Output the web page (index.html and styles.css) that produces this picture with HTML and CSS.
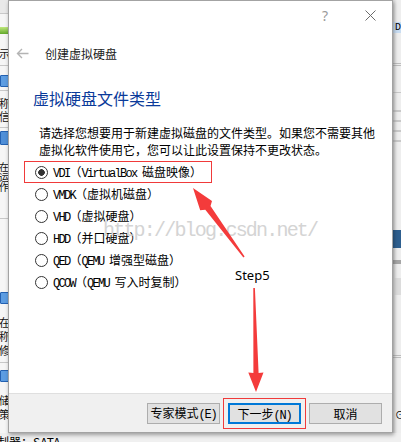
FILE: index.html
```html
<!DOCTYPE html>
<html lang="zh-CN">
<head>
  <meta charset="UTF-8" />
  <meta name="viewport" content="width=device-width, initial-scale=1.0"/>
  <title>创建虚拟硬盘</title>
  <link rel="stylesheet" href="styles.css">
</head>
<body>

  <!-- VirtualBox main window behind the dialog -->
  <div class="desk">
    <div class="desk-main">
      <div class="side side-left">
        <div class="tool"></div>
        <div class="green"></div>
        <p class="frag f1">示</p>
        <div class="rule r1"></div>
        <div class="icon i1"></div>
        <div class="rule r2"></div>
        <p class="frag f2">称<br>信</p>
        <div class="rule r3"></div>
        <div class="icon i2"></div>
        <p class="frag f3">在<br>运<br>作</p>
        <div class="rule r4"></div>
        <div class="icon i3"></div>
        <p class="frag f4">在<br>称<br>修</p>
        <div class="rule r5"></div>
        <div class="icon i4"></div>
        <p class="frag f5">储<br>策</p>
      </div>

      <div class="side side-right">
        <div class="sel">D</div>
        <div class="rule2 q1"></div>
        <div class="rule q2"></div>
        <div class="lines"><span></span><span></span><span></span><span></span></div>
        <div class="blue-row"></div>
        <div class="dark-line"></div>
        <div class="gray-row"></div>
        <div class="rule2 q3"></div>
        <div class="dot">⊙</div>
      </div>
    </div>
    <div class="desk-foot"><span class="sata">制器：SATA</span></div>
  </div>

  <!-- the wizard dialog -->
  <div class="dialog">
    <div class="titlebar">
      <span class="help">?</span>
      <span class="close">
        <svg width="11" height="11" viewBox="0 0 11 11"><path d="M0.5 0.5 L10.5 10.5 M10.5 0.5 L0.5 10.5" stroke="#6b6b6b" stroke-width="1" fill="none"/></svg>
      </span>
    </div>

    <div class="nav">
      <svg class="back" width="13" height="11" viewBox="0 0 13 11"><path d="M12.5 5.5 H1.5 M6 1 L1.5 5.5 L6 10" stroke="#b4b4b4" stroke-width="1.4" fill="none"/></svg>
      <span class="nav-title">创建虚拟硬盘</span>
    </div>

    <div class="content">
      <h1>虚拟硬盘文件类型</h1>
      <p class="desc">请选择您想要用于新建虚拟磁盘的文件类型。如果您不需要其他<br>虚拟化软件使用它，您可以让此设置保持不更改状态。</p>

      <ul class="options">
        <li class="opt marked"><span class="radio checked"></span><span class="label"><span class="lat">VDI</span>（<span class="lat">VirtualBox&nbsp;</span>磁盘映像）</span></li>
        <li class="opt"><span class="radio"></span><span class="label"><span class="lat">VMDK</span>（虚拟机磁盘）</span></li>
        <li class="opt"><span class="radio"></span><span class="label"><span class="lat">VHD</span>（虚拟硬盘）</span></li>
        <li class="opt"><span class="radio"></span><span class="label"><span class="lat">HDD</span>（并口硬盘）</span></li>
        <li class="opt"><span class="radio"></span><span class="label"><span class="lat">QED</span>（<span class="lat">QEMU&nbsp;</span>增强型磁盘）</span></li>
        <li class="opt"><span class="radio"></span><span class="label"><span class="lat">QCOW</span>（<span class="lat">QEMU&nbsp;</span>写入时复制）</span></li>
      </ul>
    </div>

    <div class="footer">
      <button class="btn">专家模式<span class="lat">(E)</span></button>
      <span class="mark-btn"><button class="btn primary">下一步<span class="lat">(N)</span></button></span>
      <button class="btn">取消</button>
    </div>
  </div>

  <!-- annotations -->
  <div class="watermark">http://blog.csdn.net/</div>
  <div class="step">Step5</div>
  <svg class="arrows" width="401" height="442" viewBox="0 0 401 442">
    <polygon fill="#f43b3b" points="193,188 212,201 210.5,206 244.6,256.5 243.4,257.5 205.3,209.8 200.2,210.2"/>
    <polygon fill="#f43b3b" points="253.3,288 254.9,288 258.6,373 263.5,372.5 256,392 248.3,372.5 253.4,373"/>
  </svg>

</body>
</html>
```

FILE: styles.css
```css
* {
  box-sizing: border-box;
  margin: 0;
  padding: 0;
}

body {
  width: 401px;
  height: 442px;
  overflow: hidden;
  position: relative;
  background: #f0f0f0;
  color: #000;
  font-family: "Noto Sans CJK SC", "Noto Sans", sans-serif;
  font-size: 12px;
}

/* ---------- background window ---------- */

.desk {
  height: 442px;
  display: flex;
  flex-direction: column;
}

.desk-main {
  flex: 1;
  display: flex;
  justify-content: space-between;
}

.side {
  width: 8px;
  overflow: hidden;
  background: #f6f6f6;
}

.side-left .tool {
  height: 14px;
  background: #e9e9e9;
  border-bottom: 1px solid #c9c9c9;
}

.side-left .green {
  height: 7px;
  margin-top: 13px;
  background: linear-gradient(#bfe77c, #62a92b);
}

.frag {
  margin-left: -1px;
  font-size: 11px;
  white-space: nowrap;
  color: #111;
}

.f1 { margin-top: 13px; line-height: 13px; }
.f2 { margin-top: 6px; line-height: 13px; }
.f3 { margin-top: 17px; line-height: 10px; font-size: 10px; }
.f4 { margin-top: 11px; line-height: 14px; }
.f5 { margin-top: 11px; line-height: 14px; }

.rule {
  height: 1px;
  background: #c8c8c8;
}

.r1 { margin-top: 5px; }
.r2 { margin-top: 3px; }
.r3 { margin-top: 4px; }
.r4 { margin-top: 26px; }
.r5 { margin-top: 5px; }

.icon {
  width: 10px;
  height: 12px;
  background: #5d9de2;
  border: 1px solid #2462b3;
  border-radius: 1px;
}

.i1 { margin-top: 9px; }
.i2 { margin-top: 3px; height: 14px; background: #4f8fd8; }
.i3 { margin-top: 73px; }
.i4 { margin-top: 7px; }

.side-right {
  background: linear-gradient(90deg, #d8d8d8, #eeeeee 4px);
}

.side-right .sel {
  margin-top: 22px;
  height: 11px;
  padding-left: 2px;
  background: #c9ddf2;
  font-family: "Liberation Mono", monospace;
  font-size: 10px;
  line-height: 11px;
}

.rule2 {
  height: 3px;
  border-top: 1px solid #bdbdbd;
  border-bottom: 1px solid #bdbdbd;
}

.q1 { margin-top: 30px; }
.q2 { margin-top: 26px; }
.q3 { margin-top: 60px; }

.side-right .lines {
  margin-top: 17px;
  display: flex;
  flex-direction: column;
  gap: 8px;
}

.side-right .lines span {
  height: 2px;
  background: #c9c9c9;
}

.blue-row {
  margin-top: 88px;
  height: 18px;
  background: #2e5f8f;
}

.dark-line {
  margin-top: 12px;
  height: 4px;
  background: #a6a6a6;
}

.gray-row {
  margin-top: 14px;
  height: 17px;
  background: #dcdcdc;
}

.dot {
  margin-top: 52px;
  padding-left: 2px;
  font-size: 10px;
  line-height: 10px;
}

.desk-foot {
  height: 9px;
  overflow: hidden;
}

.sata {
  display: block;
  margin-left: -3px;
  padding-top: 2px;
  line-height: 14px;
  white-space: nowrap;
}

/* ---------- dialog ---------- */

.dialog {
  position: absolute;
  left: 8px;
  top: 0;
  width: 385px;
  height: 433px;
  display: flex;
  flex-direction: column;
  background: #fff;
  border: 1px solid #a3a3a3;
  box-shadow: 1px 2px 4px rgba(0, 0, 0, 0.35);
}

.titlebar {
  height: 29px;
  display: flex;
  justify-content: flex-end;
  align-items: center;
  gap: 31px;
  padding-right: 15px;
}

.help {
  width: 14px;
  text-align: center;
  font-family: "Noto Sans", sans-serif;
  font-size: 14px;
  line-height: 16px;
  color: #9a9a9a;
}

.close {
  width: 14px;
  display: flex;
  justify-content: center;
}

.nav {
  height: 46px;
  display: flex;
  align-items: center;
  gap: 16px;
  padding-left: 7px;
}

.nav-title {
  font-size: 12px;
  color: #1a1a1a;
}

.content {
  flex: 1;
}

h1 {
  margin: 10px 0 0 24px;
  font-size: 16px;
  font-weight: 400;
  line-height: 24px;
  color: #0a3a9a;
}

.desc {
  margin: 14px 0 0 30px;
  font-size: 12px;
  line-height: 17px;
}

.options {
  list-style: none;
  margin: 3px 0 0 15px;
  width: 188px;
}

.opt {
  height: 22px;
  display: flex;
  align-items: center;
  padding-left: 10px;
  border: 1px solid transparent;
  white-space: nowrap;
}

.opt.marked {
  border-color: #f03a3a;
}

.radio {
  width: 13px;
  height: 13px;
  margin-right: 5px;
  border: 1px solid #333;
  border-radius: 50%;
  background: #fff;
  flex-shrink: 0;
}

.radio.checked {
  background: radial-gradient(circle, #333 0 3px, #fff 3.6px);
}

.lat {
  font-family: "Liberation Mono", monospace;
  letter-spacing: -1.7px;
}

.footer {
  height: 39px;
  display: flex;
  justify-content: flex-end;
  align-items: flex-start;
  gap: 8px;
  padding: 9px 10px 0 0;
  background: #f0f0f0;
  border-top: 1px solid #dfdfdf;
}

.btn {
  width: 73px;
  height: 21px;
  background: #e1e1e1;
  border: 1px solid #adadad;
  font-family: "Noto Sans CJK SC", sans-serif;
  font-size: 12px;
  color: #000;
  line-height: 17px;
}

.btn .lat {
  letter-spacing: -1.2px;
}

.btn.primary {
  border: 2px solid #0078d7;
}

.mark-btn {
  display: flex;
  margin: -5px -5px 0;
  padding: 4px;
  border: 1px solid #f03a3a;
}

/* ---------- annotations ---------- */

.watermark {
  position: absolute;
  left: 103px;
  top: 221px;
  font-family: "Liberation Mono", monospace;
  font-size: 20px;
  line-height: 20px;
  letter-spacing: -1.8px;
  color: #d4d4d4;
  pointer-events: none;
}

.step {
  position: absolute;
  left: 235px;
  top: 267px;
  font-family: "Noto Sans", sans-serif;
  font-size: 13px;
  line-height: 17px;
  color: #000;
}

.arrows {
  position: absolute;
  left: 0;
  top: 0;
  pointer-events: none;
}
```
